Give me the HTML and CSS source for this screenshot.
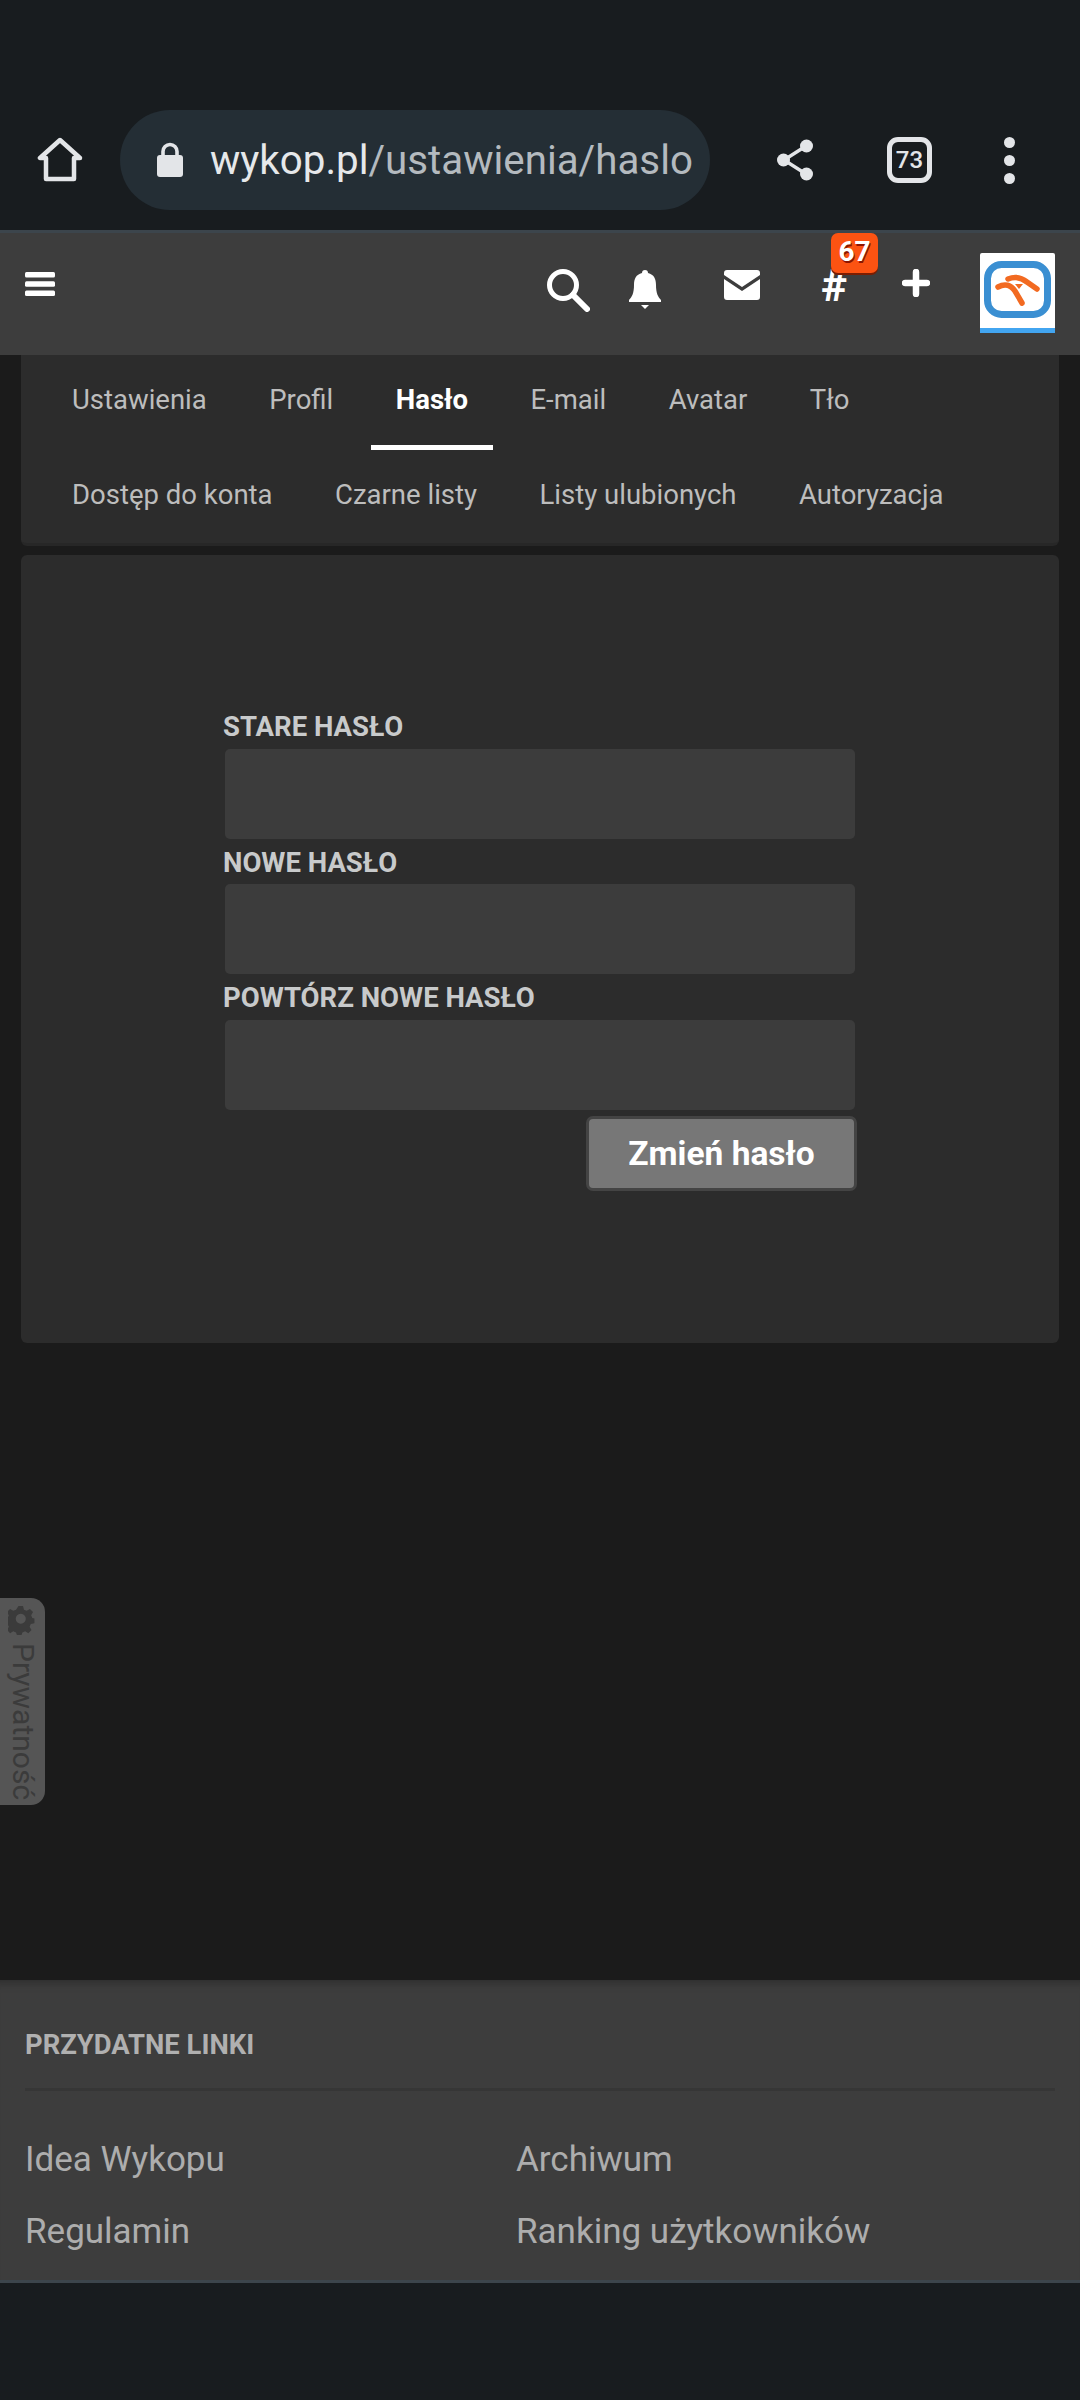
FILE: index.html
```html
<!DOCTYPE html>
<html lang="pl">
<head>
    <meta charset="utf-8">
    <title>Hasło - wykop.pl</title>
    <link rel="stylesheet" href="styles.css">
</head>
<body>
    <div class="browserBar">
        <svg class="homeIcon" viewBox="0 0 46 46"><path d="M23 3 L3 21 H9 V42 H37 V21 H43 Z" fill="none" stroke="#e3e5e8" stroke-width="4.5" stroke-linejoin="round"/></svg>
        <div class="addressPill">
            <svg class="lockIcon" viewBox="0 0 28 36"><path d="M7 15 V9.5 a7 7 0 0 1 14 0 V15" fill="none" stroke="#e3e5e8" stroke-width="3.6"/><rect x="1" y="13" width="26" height="22" rx="3" fill="#e3e5e8"/></svg>
            <span class="addressText">wykop.pl<span class="addressPath">/ustawienia/haslo</span></span>
        </div>
        <svg class="shareIcon" viewBox="0 0 38 42"><path d="M30 7 L8 21 L30 35" fill="none" stroke="#e3e5e8" stroke-width="3.4"/><circle cx="30.500" cy="7" r="6.500" fill="#e3e5e8"/><circle cx="7.500" cy="21" r="6.500" fill="#e3e5e8"/><circle cx="30.500" cy="35" r="6.500" fill="#e3e5e8"/></svg>
        <div class="tabCount">73</div>
        <div class="dots"><i></i><i></i><i></i></div>
    </div>

    <header class="siteHeader">
        <svg class="menuIcon" viewBox="0 0 30 24"><rect width="30" height="5.500" y="0" rx="1.500"/><rect width="30" height="5.500" y="9.200" rx="1.500"/><rect width="30" height="5.500" y="18.500" rx="1.500"/></svg>
        <nav class="headerIcons">
            <svg class="searchIcon" viewBox="0 0 44 44"><circle cx="17" cy="17" r="13.500" fill="none" stroke="#fff" stroke-width="5"/><path d="M27 27 L41 41" stroke="#fff" stroke-width="6" stroke-linecap="round"/></svg>
            <svg class="bellIcon" viewBox="0 0 34 40"><path d="M17 0 c2 0 3 1 3 3 c6 1.500 8 6 8 12 c0 8 2 12 5 15 v2 H1 v-2 c3 -3 5 -7 5 -15 c0 -6 2 -10.500 8 -12 c0 -2 1 -3 3 -3 Z M13 35 h8 l-4 4 Z" fill="#fff"/></svg>
            <svg class="mailIcon" viewBox="0 0 36 30"><path d="M3 0 H33 a3 3 0 0 1 3 3 V5 L18 17 L0 5 V3 a3 3 0 0 1 3 -3 Z M0 9 L18 21 L36 9 V27 a3 3 0 0 1 -3 3 H3 a3 3 0 0 1 -3 -3 Z" fill="#fff"/></svg>
            <div class="tagItem">
                <span class="hash">#</span>
                <span class="badge">67</span>
            </div>
            <svg class="plusIcon" viewBox="0 0 28 28"><path d="M14 3 V25 M3 14 H25" stroke="#fff" stroke-width="6.500" stroke-linecap="round"/></svg>
            <svg class="avatar" viewBox="0 0 75 80">
                <rect width="75" height="80" rx="2" fill="#fff"/>
                <rect y="75" width="75" height="5" fill="#42a5f0"/>
                <rect x="7.500" y="11.500" width="60" height="50" rx="14" fill="none" stroke="#3a8fd2" stroke-width="7"/>
                <g fill="none" stroke="#f26a21" stroke-width="5.500" stroke-linecap="round">
                    <path d="M18 34 C25 30 31 32 35 38 L42 50"/>
                    <path d="M28 26 C35 23 42 25 47 29 L57 36"/>
                </g>
                <path d="M35 31 L43 31 L39 36 Z" fill="#f26a21"/>
            </svg>
        </nav>
    </header>

    <main class="content">
        <section class="card tabsCard">
            <ul class="tabRow">
                <li>Ustawienia</li>
                <li>Profil</li>
                <li class="active">Hasło</li>
                <li>E-mail</li>
                <li>Avatar</li>
                <li>Tło</li>
            </ul>
            <ul class="tabRow">
                <li>Dostęp do konta</li>
                <li>Czarne listy</li>
                <li>Listy ulubionych</li>
                <li>Autoryzacja</li>
            </ul>
        </section>

        <section class="card formCard">
            <form class="passwordForm">
                <label for="oldPass">STARE HASŁO</label>
                <input type="password" id="oldPass">
                <label for="newPass">NOWE HASŁO</label>
                <input type="password" id="newPass">
                <label class="lastLabel" for="newPass2">POWTÓRZ NOWE HASŁO</label>
                <input type="password" id="newPass2">
                <button type="submit">Zmień hasło</button>
            </form>
        </section>
    </main>

    <div class="privacyTab">
        <svg class="gearIcon" viewBox="0 0 28 28"><path d="M11.500 0 h5 l1 4 l3 1.300 l3.500 -2.100 l3.500 3.500 l-2.100 3.500 l1.300 3 l2.300 .6 v5 l-4 1 l-1.300 3 l2.100 3.500 l-3.500 3.500 l-3.500 -2.100 l-3 1.300 l-1 3 h-5 l-1 -3 l-3 -1.300 l-3.500 2.100 l-3.500 -3.500 l2.100 -3.500 l-1.300 -3 l-3 -1 v-5 l3 -.6 l1.300 -3 l-2.100 -3.500 l3.500 -3.500 l3.500 2.100 l3 -1.300 Z M14 8.500 a5.500 5.500 0 1 0 .01 0 Z" fill="#3b3b3b" fill-rule="evenodd" transform="scale(.88)"/></svg>
        <span class="privacyText">Prywatność</span>
    </div>

    <footer class="siteFooter">
        <h4>PRZYDATNE LINKI</h4>
        <ul class="footerLinks">
            <li>Idea Wykopu</li>
            <li>Archiwum</li>
            <li>Regulamin</li>
            <li>Ranking użytkowników</li>
        </ul>
    </footer>
    <div class="bottomBar"></div>
</body>
</html>
```

FILE: styles.css
```css
* {
    box-sizing: border-box;
}
html, body {
    margin: 0;
    padding: 0;
}
body {
    position: relative;
    display: flex;
    flex-direction: column;
    width: 1080px;
    height: 2400px;
    overflow: hidden;
    background: #1b1b1b;
    font-family: Roboto, 'Liberation Sans', sans-serif;
}
ul {
    list-style: none;
    margin: 0;
    padding: 0;
}

/* browser chrome */
.browserBar {
    display: flex;
    align-items: center;
    height: 230px;
    padding-top: 90px;
    background: #181c1f;
}
.homeIcon {
    width: 46px;
    height: 46px;
    margin-left: 37px;
    flex-shrink: 0;
}
.addressPill {
    display: flex;
    align-items: center;
    width: 590px;
    height: 100px;
    margin-left: 37px;
    padding-left: 36px;
    border-radius: 50px;
    background: #242e35;
    flex-shrink: 0;
}
.lockIcon {
    width: 28px;
    height: 36px;
    flex-shrink: 0;
}
.addressText {
    margin-left: 26px;
    font-size: 40.300px;
    color: #e6e8ea;
    white-space: nowrap;
}
.addressPath {
    color: #b4babf;
}
.shareIcon {
    width: 38px;
    height: 42px;
    margin-left: 66px;
    flex-shrink: 0;
}
.tabCount {
    display: flex;
    align-items: center;
    justify-content: center;
    width: 45px;
    height: 46px;
    margin-left: 73px;
    border: 5px solid #e3e5e8;
    border-radius: 11px;
    font-size: 24px;
    font-weight: 500;
    color: #e3e5e8;
    flex-shrink: 0;
}
.dots {
    display: flex;
    flex-direction: column;
    gap: 7px;
    margin-left: 72px;
}
.dots i {
    display: block;
    width: 11px;
    height: 11px;
    border-radius: 50%;
    background: #e3e5e8;
}

/* site header */
.siteHeader {
    display: flex;
    justify-content: space-between;
    height: 125px;
    border-top: 3px solid #3c454c;
    background: #3d3d3d;
}
.menuIcon {
    width: 30px;
    height: 24px;
    margin: 39px 0 0 25px;
    fill: #fff;
}
.headerIcons {
    position: relative;
    display: flex;
    align-items: flex-start;
    padding-right: 25px;
}
.searchIcon {
    width: 44px;
    height: 44px;
    margin-top: 35px;
}
.bellIcon {
    width: 34px;
    height: 40px;
    margin: 37px 0 0 38px;
}
.mailIcon {
    width: 36px;
    height: 30px;
    margin: 37px 0 0 62px;
}
.tagItem {
    position: relative;
    width: 30px;
    margin-left: 59px;
}
.hash {
    display: block;
    margin-top: 28px;
    font-size: 44px;
    line-height: 50px;
    font-weight: 700;
    color: #fff;
    text-align: center;
}
.badge {
    position: absolute;
    top: 0;
    left: 12px;
    width: 47px;
    height: 40px;
    border-radius: 7px;
    background: #fc5312;
    box-shadow: 0 2px 0 #7c1d00;
    font-size: 28px;
    line-height: 38px;
    font-weight: 700;
    color: #fff;
    text-align: center;
    text-shadow: 1px 2px 0 #8c1500;
}
.plusIcon {
    width: 28px;
    height: 28px;
    margin: 36px 0 0 53px;
}
.avatar {
    width: 75px;
    height: 80px;
    margin: 20px 0 0 50px;
}

/* content cards */
.content {
    flex: 1;
    display: flex;
    flex-direction: column;
    gap: 9px;
    padding: 0 21px;
}
.card {
    border-radius: 0 0 6px 6px;
    background: #2c2c2c;
}
.tabsCard {
    height: 191px;
    border-bottom: 3px solid #272727;
    padding-left: 26px;
}
.tabRow {
    display: flex;
    gap: 12.500px;
    height: 95px;
    font-size: 27.500px;
    color: #bdbdbd;
}
.tabRow li {
    height: 95px;
    padding: 0 25px;
    line-height: 90px;
    white-space: nowrap;
}
.tabRow li.active {
    border-bottom: 5px solid #fff;
    font-weight: 700;
    color: #fff;
}
.formCard {
    height: 788px;
    padding: 146px 0 0 202px;
    border-radius: 6px;
}
.passwordForm {
    display: flex;
    flex-direction: column;
    width: 634px;
}
.passwordForm label {
    height: 48px;
    padding-top: 6px;
    font-size: 27.500px;
    line-height: 40px;
    font-weight: 700;
    color: #c8cacb;
}
.passwordForm label + input + label {
    height: 45px;
    padding-top: 5px;
    line-height: 38px;
}
.passwordForm .lastLabel {
    height: 46px;
}
.passwordForm input {
    display: block;
    width: 630px;
    height: 90px;
    margin: 0 0 0 2px;
    border: none;
    border-radius: 5px;
    background: #3c3c3c;
}
.passwordForm button {
    align-self: flex-end;
    width: 271px;
    height: 75px;
    margin: 6px 0 0;
    padding: 0;
    border: 3px solid #444;
    border-radius: 7px;
    background: #777;
    font-family: inherit;
    font-size: 33.500px;
    font-weight: 700;
    color: #fff;
}

/* side tab */
.privacyTab {
    position: absolute;
    top: 1598px;
    left: 0;
    display: flex;
    flex-direction: column;
    align-items: center;
    width: 45px;
    height: 207px;
    padding-top: 8px;
    border-radius: 0 14px 14px 0;
    background: #555;
}
.gearIcon {
    width: 29px;
    height: 29px;
    flex-shrink: 0;
}
.privacyText {
    margin-top: 8px;
    writing-mode: vertical-rl;
    font-size: 30px;
    line-height: 32px;
    color: #3b3b3b;
    white-space: nowrap;
}

/* footer */
.siteFooter {
    height: 303px;
    padding: 0 25px;
    border-bottom: 3px solid #3c454c;
    background: #3d3d3d;
    box-shadow: inset 0 12px 10px -10px #2b2b2b;
}
.siteFooter h4 {
    height: 111px;
    margin: 0;
    padding-top: 47px;
    border-bottom: 3px solid #363636;
    font-size: 27.400px;
    line-height: 36px;
    font-weight: 700;
    color: #b0b0b0;
}
.footerLinks {
    display: grid;
    grid-template-columns: 491px 1fr;
    grid-auto-rows: 72px;
    padding-top: 33px;
    font-size: 35px;
    line-height: 72px;
    color: #adadad;
}
.bottomBar {
    height: 117px;
    background: #181c1f;
}
```
